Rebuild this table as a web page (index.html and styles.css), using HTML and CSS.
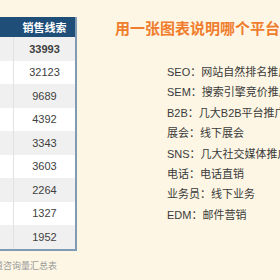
FILE: index.html
```html
<!DOCTYPE html>
<html lang="zh">
<head>
<meta charset="utf-8">
<link rel="stylesheet" href="styles.css">
</head>
<body>
<div class="page">
  <div class="left">
    <table class="tbl">
      <thead>
        <tr><th class="name"></th><th>销售线索</th></tr>
      </thead>
      <tbody>
        <tr class="odd total"><td class="name"></td><td>33993</td></tr>
        <tr><td class="name"></td><td>32123</td></tr>
        <tr class="odd"><td class="name"></td><td>9689</td></tr>
        <tr><td class="name"></td><td>4392</td></tr>
        <tr class="odd"><td class="name"></td><td>3343</td></tr>
        <tr><td class="name"></td><td>3603</td></tr>
        <tr class="odd"><td class="name"></td><td>2264</td></tr>
        <tr><td class="name"></td><td>1327</td></tr>
        <tr class="odd"><td class="name"></td><td>1952</td></tr>
      </tbody>
    </table>
    <div class="caption">渠道咨询量汇总表</div>
  </div>
  <div class="right">
    <h1 class="title">用一张图表说明哪个平台</h1>
    <ul class="list">
      <li>SEO：网站自然排名推广</li>
      <li>SEM：搜索引擎竞价推广</li>
      <li>B2B：几大B2B平台推广</li>
      <li>展会：线下展会</li>
      <li>SNS：几大社交媒体推广</li>
      <li>电话：电话直销</li>
      <li>业务员：线下业务</li>
      <li>EDM：邮件营销</li>
    </ul>
  </div>
</div>
</body>
</html>
```

FILE: styles.css
```css
html, body {
  margin: 0;
  padding: 0;
  width: 280px;
  height: 280px;
  overflow: hidden;
  background: #fdf6e4;
  font-family: "Liberation Sans", "Noto Sans CJK SC", sans-serif;
}

.page {
  display: flex;
  align-items: flex-start;
}

.left {
  width: 77px;
  flex-shrink: 0;
  padding-top: 17px;
}

.tbl {
  margin-left: -67px;
  border-collapse: separate;
  border-spacing: 0;
  table-layout: fixed;
  width: 144px;
  border-right: 2px solid #7f9cb4;
  border-bottom: 2px solid #7f9cb4;
  font-size: 11px;
  color: #404040;
}

.tbl th, .tbl td {
  padding: 0;
  text-align: center;
  border-left: 1px solid #e2e2e2;
}

.tbl .name {
  width: 80px;
  border-left: none;
}

.tbl th {
  height: 20px;
  background: #1f4e79;
  color: #ffffff;
  font-weight: bold;
  border-left-color: #1f4e79;
}

.tbl td {
  height: 23.5px;
  background: #ffffff;
}

.tbl tr.odd td {
  background: #f0f0f0;
}

.tbl tr.total td {
  font-weight: bold;
}

.caption {
  margin-top: 9px;
  margin-left: -15px;
  font-size: 9px;
  line-height: 12px;
  color: #9a9a9a;
  white-space: nowrap;
}

.right {
  padding-left: 38px;
  padding-top: 18px;
  white-space: nowrap;
}

.title {
  margin: 0;
  font-size: 15px;
  line-height: 20px;
  font-weight: bold;
  color: #ef7d2d;
  font-family: "Noto Sans CJK SC", sans-serif;
}

.list {
  list-style: none;
  margin: 24px 0 0 52px;
  padding: 0;
  font-size: 11px;
  line-height: 20.4px;
  color: #3a3a3a;
}
```
